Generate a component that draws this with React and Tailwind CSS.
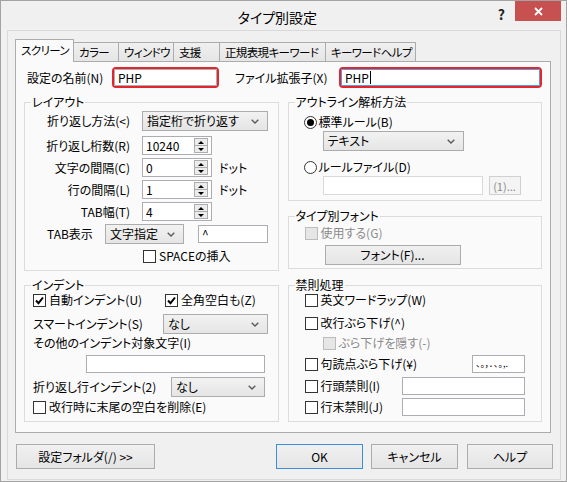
import clsx from 'clsx';

const tabs = [
  { label: 'スクリーン', w: 'min-w-[59px]', active: true },
  { label: 'カラー', w: 'min-w-[46px]' },
  { label: 'ウィンドウ', w: 'min-w-[55px]' },
  { label: '支援', w: 'min-w-[47px]' },
  { label: '正規表現キーワード', w: 'min-w-[107px]' },
  { label: 'キーワードヘルプ', w: 'min-w-[86px]' },
];

function Chevron() {
  return (
    <svg width="8" height="5" viewBox="0 0 8 5">
      <path d="M0.7 0.7 L4 4 L7.3 0.7" fill="none" stroke="#5a5a5a" strokeWidth="1.4" />
    </svg>
  );
}

function Combo({ value, className }) {
  return (
    <div
      className={clsx(
        'flex h-[20px] items-center justify-between border border-[#acacac] bg-linear-to-b from-[#f2f2f2] to-[#e5e5e5] pl-[4px] pr-[8px]',
        className
      )}
    >
      <span className="whitespace-nowrap">{value}</span>
      <Chevron />
    </div>
  );
}

function TextBox({ value, disabled, className }) {
  return (
    <div
      className={clsx(
        'flex h-[18px] items-center bg-white pl-[3px]',
        disabled ? 'border border-[#d9d9d9]' : 'border border-[#abadb3]',
        className
      )}
    >
      {value}
    </div>
  );
}

function Spin({ value }) {
  return (
    <div className="flex h-[19px] w-[70px] items-center border border-[#abadb3] bg-white pl-[3px] pr-[3px]">
      <span className="flex-1">{value}</span>
      <div className="flex h-[15px] w-[14px] flex-col border border-[#acacac] bg-[#ececec]">
        <div className="flex flex-1 items-center justify-center border-b border-[#acacac]">
          <svg width="6" height="3" viewBox="0 0 6 3">
            <path d="M0 3h6L3 0z" fill="#000" />
          </svg>
        </div>
        <div className="flex flex-1 items-center justify-center">
          <svg width="6" height="3" viewBox="0 0 6 3">
            <path d="M0 0h6L3 3z" fill="#000" />
          </svg>
        </div>
      </div>
    </div>
  );
}

function Check({ label, checked, disabled, className }) {
  return (
    <div className={clsx('flex h-[14px] items-center gap-[3px] whitespace-nowrap', className)}>
      <span
        className={clsx(
          'flex h-[13px] w-[13px] shrink-0 items-center justify-center border',
          disabled ? 'border-[#bcbcbc] bg-[#e6e6e6]' : 'border-[#333333] bg-white'
        )}
      >
        {checked ? (
          <svg width="9" height="9" viewBox="0 0 9 9">
            <path d="M1 4.5 L3.5 7.2 L8 1.5" fill="none" stroke="#000" strokeWidth="2" />
          </svg>
        ) : null}
      </span>
      <span className={disabled ? 'text-[#8a8a8a]' : ''}>{label}</span>
    </div>
  );
}

function Radio({ label, checked, className }) {
  return (
    <div className={clsx('flex h-[14px] items-center gap-[2px] whitespace-nowrap', className)}>
      <span className="flex h-[13px] w-[13px] items-center justify-center rounded-full border border-[#333333] bg-white">
        {checked ? <span className="h-[7px] w-[7px] rounded-full bg-black" /> : null}
      </span>
      <span>{label}</span>
    </div>
  );
}

function Btn({ children, className, disabled }) {
  return (
    <div
      className={clsx(
        'flex items-center justify-center whitespace-nowrap border bg-linear-to-b',
        disabled
          ? 'border-[#d0d0d0] from-[#f4f4f4] to-[#f4f4f4] text-[#8a8a8a]'
          : 'border-[#acacac] from-[#f0f0f0] to-[#e5e5e5]',
        className
      )}
    >
      {children}
    </div>
  );
}

function Group({ title, className, children }) {
  return (
    <fieldset className={clsx('min-w-0 border border-[#dcdcdc]', className)}>
      <legend className="ml-[6px] px-[1px] leading-[16px]">{title}</legend>
      {children}
    </fieldset>
  );
}

function Row({ label, children }) {
  return (
    <div className="flex items-center">
      <span className="w-[105px] whitespace-nowrap text-right">{label}</span>
      <div className="ml-[12px] flex items-center">{children}</div>
    </div>
  );
}

export default function App() {
  return (
    <div className="flex h-[482px] w-[567px] flex-col border border-[#a3a3a3] bg-[#f0f0f0] font-['Noto_Sans_CJK_JP',sans-serif] text-[12px] leading-[16px] text-black [font-feature-settings:'palt']">
      {/* title bar */}
      <div className="flex h-[29px] items-start">
        <div className="flex-1 pt-[6px] pl-[56px] text-center text-[14px] leading-[20px]">タイプ別設定</div>
        <div className="pt-[4px] pr-[10px] text-[14px] font-bold leading-[18px] text-[#222]">?</div>
        <div className="mr-[5px] flex h-[20px] w-[46px] items-center justify-center bg-[#c75050]">
          <svg width="9" height="9" viewBox="0 0 9 9">
            <path d="M1 1 L8 8 M8 1 L1 8" stroke="#fff" strokeWidth="1.8" />
          </svg>
        </div>
      </div>

      {/* client area */}
      <div className="mb-[1px] ml-[6px] mr-[5px] flex flex-1 flex-col border border-[#d9d9d9] bg-[#f0f0f0] pl-[7px] pr-[9px] pt-[8px]">
        <div className="flex h-[22px] items-end text-[11.5px] tracking-[-0.6px]">
          {tabs.map((t) =>
            t.active ? (
              <div
                key={t.label}
                className={clsx(
                  'relative z-10 -mb-px flex h-[23px] items-start whitespace-nowrap border border-b-0 border-[#acacac] bg-[#fafafa] pl-[5px] pr-[3px] pt-[2px]',
                  t.w
                )}
              >
                {t.label}
              </div>
            ) : (
              <div
                key={t.label}
                className={clsx(
                  '-ml-px flex h-[19px] items-center whitespace-nowrap border border-b-0 border-[#acacac] bg-linear-to-b from-[#f0f0f0] to-[#e5e5e5] pl-[5px] pr-[3px]',
                  t.w
                )}
              >
                {t.label}
              </div>
            )
          )}
        </div>

        {/* tab page */}
        <div className="h-[372px] border border-[#acacac] bg-[#fafafa] px-[8px] pt-[5px]">
          <div className="flex h-[21px] items-center">
            <span className="ml-[3px] w-[85px] whitespace-nowrap">設定の名前(N)</span>
            <div className="h-[21px] w-[107px] rounded-[4px] border-2 border-[#e3262b]">
              <div className="flex h-full items-center border border-[#abadb3] bg-white pl-[3px]">PHP</div>
            </div>
            <span className="ml-[16px] w-[104px] whitespace-nowrap">ファイル拡張子(X)</span>
            <div className="h-[21px] flex-1 rounded-[4px] border-2 border-[#e3262b]">
              <div className="flex h-full items-center border border-[#569de5] bg-white pl-[3px]">
                PHP<span className="ml-[1px] h-[13px] w-px bg-black" />
              </div>
            </div>
          </div>

          <div className="mt-[6px] grid grid-cols-2 gap-x-[9px]">
            {/* left column */}
            <div className="flex flex-col">
              <Group title="レイアウト" className="h-[177px]">
                <div className="flex flex-col pt-[1px]">
                  <Row label="折り返し方法(<)">
                    <Combo value="指定桁で折り返す" className="w-[126px]" />
                  </Row>
                  <div className="mt-[5px]">
                    <Row label="折り返し桁数(R)">
                      <Spin value="10240" />
                    </Row>
                  </div>
                  <div className="mt-[3px]">
                    <Row label="文字の間隔(C)">
                      <Spin value="0" />
                      <span className="ml-[7px]">ドット</span>
                    </Row>
                  </div>
                  <div className="mt-[3px]">
                    <Row label="行の間隔(L)">
                      <Spin value="1" />
                      <span className="ml-[7px]">ドット</span>
                    </Row>
                  </div>
                  <div className="mt-[3px]">
                    <Row label="TAB幅(T)">
                      <Spin value="4" />
                    </Row>
                  </div>
                  <div className="mt-[3px] flex items-center">
                    <span className="ml-[22px] w-[58px] whitespace-nowrap">TAB表示</span>
                    <Combo value="文字指定" className="w-[79px]" />
                    <TextBox value="^" className="ml-[14px] w-[70px] items-start" />
                  </div>
                  <Check label="SPACEの挿入" className="ml-[118px] mt-[5px]" />
                </div>
              </Group>

              <Group title="インデント" className="mt-[6px] h-[145px]">
                <div className="flex flex-col pl-[8px]">
                  <div className="flex">
                    <div className="w-[132px]">
                      <Check label="自動インデント(U)" checked />
                    </div>
                    <Check label="全角空白も(Z)" checked />
                  </div>
                  <div className="mt-[7px] flex items-center">
                    <span className="w-[130px] whitespace-nowrap">スマートインデント(S)</span>
                    <Combo value="なし" className="w-[105px]" />
                  </div>
                  <div className="mt-[1px] whitespace-nowrap">その他のインデント対象文字(I)</div>
                  <TextBox className="ml-[53px] mt-[4px] w-[179px]" />
                  <div className="mt-[4px] flex items-center">
                    <span className="w-[138px] whitespace-nowrap">折り返し行インデント(2)</span>
                    <Combo value="なし" className="w-[94px]" />
                  </div>
                  <Check label="改行時に末尾の空白を削除(E)" className="mt-[3px]" />
                </div>
              </Group>
            </div>

            {/* right column */}
            <div className="flex flex-col">
              <Group title="アウトライン解析方法" className="h-[107px]">
                <div className="flex flex-col">
                  <Radio label="標準ルール(B)" checked className="ml-[15px] mt-[5px]" />
                  <Combo value="テキスト" className="ml-[34px] mt-[2px] w-[141px]" />
                  <Radio label="ルールファイル(D)" className="ml-[15px] mt-[9px]" />
                  <div className="ml-[34px] mt-[2px] flex">
                    <TextBox disabled className="h-[19px] w-[160px]" />
                    <Btn disabled className="ml-[6px] h-[19px] w-[32px] text-[11px]">
                      (1)...
                    </Btn>
                  </div>
                </div>
              </Group>

              <Group title="タイプ別フォント" className="mt-[7px] h-[61px]">
                <div className="flex flex-col">
                  <Check label="使用する(G)" disabled className="ml-[16px] mt-[2px]" />
                  <Btn className="ml-[36px] mt-[5px] h-[20px] w-[136px]">フォント(F)...</Btn>
                </div>
              </Group>

              <Group title="禁則処理" className="mt-[8px] h-[145px]">
                <div className="flex flex-col pl-[16px] pr-[16px]">
                  <Check label="英文ワードラップ(W)" />
                  <Check label="改行ぶら下げ(^)" className="mt-[9px]" />
                  <Check label="ぶら下げを隠す(-)" disabled className="ml-[18px] mt-[6px]" />
                  <div className="mt-[5px] flex h-[18px] items-center">
                    <Check label="句読点ぶら下げ(¥)" />
                    <TextBox
                      value="、。，．､｡,."
                      className="ml-auto w-[53px] overflow-hidden whitespace-nowrap text-[9px]"
                    />
                  </div>
                  <div className="mt-[4px] flex h-[18px] items-center">
                    <Check label="行頭禁則(I)" />
                    <TextBox className="ml-auto w-[123px]" />
                  </div>
                  <div className="mt-[3px] flex h-[18px] items-center">
                    <Check label="行末禁則(J)" />
                    <TextBox className="ml-auto w-[123px]" />
                  </div>
                </div>
              </Group>
            </div>
          </div>
        </div>

        {/* buttons */}
        <div className="-mr-[2px] ml-[1px] mt-[11px] flex h-[25px]">
          <Btn className="w-[139px]">設定フォルダ(/) &gt;&gt;</Btn>
          <Btn className="ml-auto w-[87px] !border-[#3c8fe0]">OK</Btn>
          <Btn className="ml-[8px] w-[87px]">キャンセル</Btn>
          <Btn className="ml-[9px] w-[86px]">ヘルプ</Btn>
        </div>
      </div>
    </div>
  );
}
